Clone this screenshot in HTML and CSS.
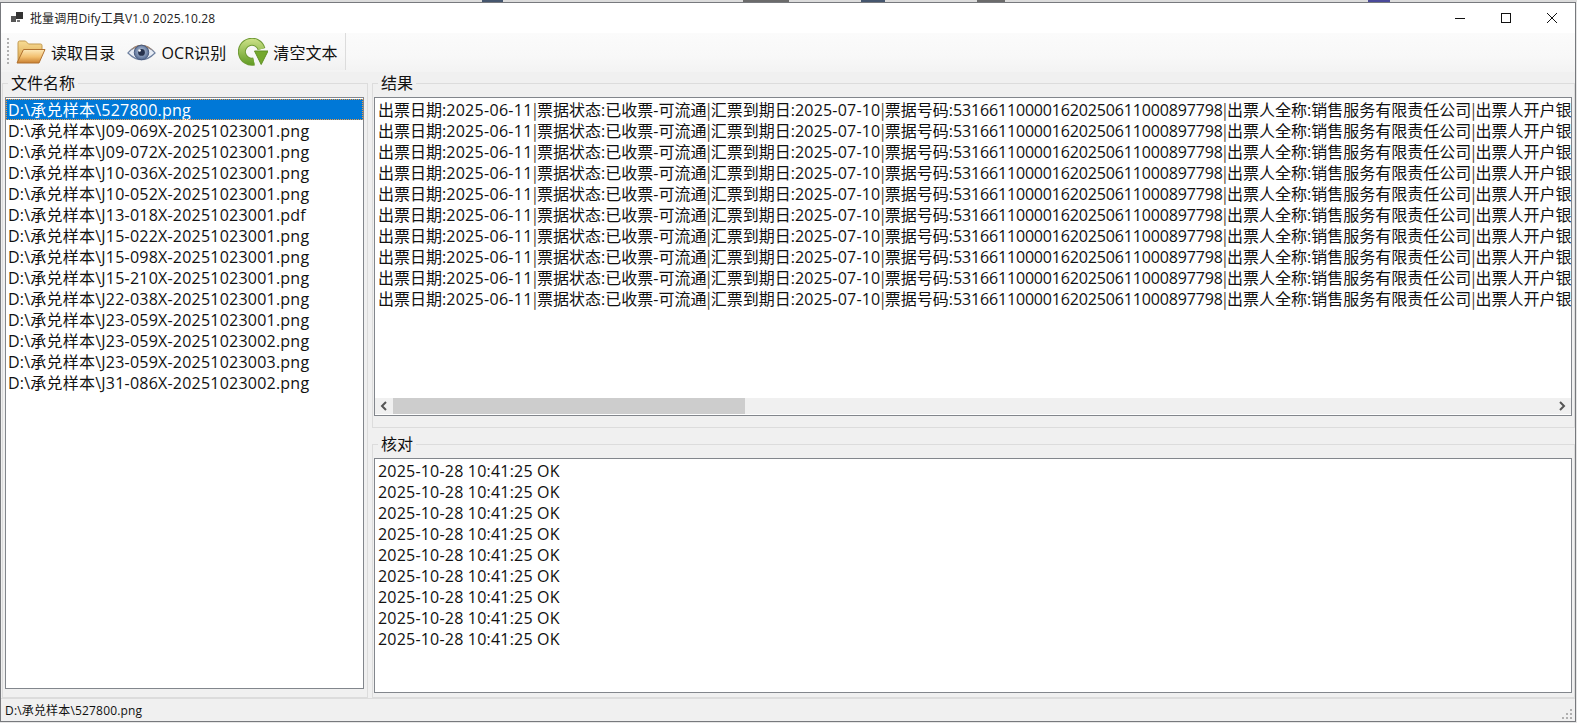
FILE: index.html
```html
<!DOCTYPE html>
<html lang="zh-CN">
<head>
<meta charset="utf-8">
<title>批量调用Dify工具V1.0 2025.10.28</title>
<link rel="stylesheet" href="styles.css">
</head>
<body>
<div class="desktop"></div>
<div class="window">
  <header class="titlebar">
    <svg class="appicon" width="12" height="12" viewBox="0 0 12 12"><rect x="0" y="4" width="5" height="6" fill="#555"/><rect x="5" y="0" width="7" height="7" fill="#333"/><rect x="6" y="8" width="3" height="2" fill="#777"/></svg>
    <span class="title">批量调用Dify工具V1.0 2025.10.28</span>
    <div class="wincontrols">
      <svg width="12" height="12" viewBox="0 0 12 12"><path d="M1 6.500h10" stroke="#111" fill="none"/></svg>
      <svg width="12" height="12" viewBox="0 0 12 12"><rect x="1.500" y="1.500" width="9" height="9" stroke="#111" fill="none"/></svg>
      <svg width="12" height="12" viewBox="0 0 12 12"><path d="M1 1l10 10M11 1L1 11" stroke="#111" fill="none"/></svg>
    </div>
  </header>
  <div class="toolbar">
    <div class="tools">
      <span class="grip"></span>
      <button class="tool">
        <svg width="30" height="24" viewBox="0 0 30 24">
          <defs>
            <linearGradient id="fb" x1="0" y1="0" x2="0" y2="1"><stop offset="0" stop-color="#f8dc94"/><stop offset="1" stop-color="#d9a048"/></linearGradient>
            <linearGradient id="ff" x1="0" y1="0" x2="0" y2="1"><stop offset="0" stop-color="#fdeabb"/><stop offset=".55" stop-color="#f2bf6e"/><stop offset="1" stop-color="#c97f30"/></linearGradient>
          </defs>
          <path d="M2 22V3Q2 1 3.500 1h6l3 3h12q1.500 0 1.500 1.500V10H8L3 22z" fill="url(#fb)" stroke="#c39a50"/>
          <path d="M1 23h22l6-13.500H7.500z" fill="url(#ff)" stroke="#b0712f" stroke-linejoin="round"/>
        </svg>
        <span>读取目录</span>
      </button>
      <button class="tool">
        <svg width="29" height="24" viewBox="0 0 30 24">
          <defs>
            <radialGradient id="ir" cx=".5" cy=".45" r=".55"><stop offset="0" stop-color="#c6d3e8"/><stop offset="1" stop-color="#50678f"/></radialGradient>
            <linearGradient id="lid" x1="0" y1="0" x2="0" y2="1"><stop offset="0" stop-color="#b98552"/><stop offset="1" stop-color="#7c8aa5"/></linearGradient>
          </defs>
          <path d="M1 13Q15-3 29 13Q15 27 1 13z" fill="#e8edf5" stroke="#6c7f9f" stroke-width="1.200"/>
          <path d="M1 12Q15-3 29 12Q15 2 1 12z" fill="url(#lid)"/>
          <circle cx="15" cy="12.500" r="7.500" fill="url(#ir)" stroke="#46597d"/>
          <circle cx="15" cy="12.500" r="3.500" fill="#26324d"/>
          <circle cx="13" cy="10.500" r="1.300" fill="#fff"/>
        </svg>
        <span>OCR识别</span>
      </button>
      <button class="tool">
        <svg width="30" height="28" viewBox="0 0 30 28">
          <defs>
            <linearGradient id="gr" gradientUnits="userSpaceOnUse" x1="0" y1="0" x2="0" y2="28"><stop offset="0" stop-color="#cfe38a"/><stop offset="1" stop-color="#5c981f"/></linearGradient>
          </defs>
          <path d="M16 23.500A10 10 0 1 1 23.500 11" fill="none" stroke="#6f9a35" stroke-width="8"/>
          <path d="M16 23.500A10 10 0 1 1 23.500 11" fill="none" stroke="url(#gr)" stroke-width="6"/>
          <path d="M16.500 13h13.500l-6.800 13.500z" fill="#74a82e" stroke="#5f9024" stroke-linejoin="round"/>
        </svg>
        <span>清空文本</span>
      </button>
    </div>
  </div>
  <main class="content">
    <fieldset class="group files">
      <legend>文件名称</legend>
      <ul class="box list">
        <li class="selected">D:\承兑样本\527800.png</li>
        <li>D:\承兑样本\J09-069X-20251023001.png</li>
        <li>D:\承兑样本\J09-072X-20251023001.png</li>
        <li>D:\承兑样本\J10-036X-20251023001.png</li>
        <li>D:\承兑样本\J10-052X-20251023001.png</li>
        <li>D:\承兑样本\J13-018X-20251023001.pdf</li>
        <li>D:\承兑样本\J15-022X-20251023001.png</li>
        <li>D:\承兑样本\J15-098X-20251023001.png</li>
        <li>D:\承兑样本\J15-210X-20251023001.png</li>
        <li>D:\承兑样本\J22-038X-20251023001.png</li>
        <li>D:\承兑样本\J23-059X-20251023001.png</li>
        <li>D:\承兑样本\J23-059X-20251023002.png</li>
        <li>D:\承兑样本\J23-059X-20251023003.png</li>
        <li>D:\承兑样本\J31-086X-20251023002.png</li>
      </ul>
    </fieldset>
    <div class="right">
      <fieldset class="group results">
        <legend>结果</legend>
        <div class="box resultbox">
          <div class="lines">
            <p>出票日期:<span class="d1">2025-06-11</span><b>|</b>票据状态:已收票-可流通<b>|</b>汇票到期日:<span class="d2">2025-07-10</span><b>|</b>票据号码:<span class="num">531661100001620250611000897798</span><b>|</b>出票人全称:销售服务有限责任公司<b>|</b>出票人开户银</p>
            <p>出票日期:<span class="d1">2025-06-11</span><b>|</b>票据状态:已收票-可流通<b>|</b>汇票到期日:<span class="d2">2025-07-10</span><b>|</b>票据号码:<span class="num">531661100001620250611000897798</span><b>|</b>出票人全称:销售服务有限责任公司<b>|</b>出票人开户银</p>
            <p>出票日期:<span class="d1">2025-06-11</span><b>|</b>票据状态:已收票-可流通<b>|</b>汇票到期日:<span class="d2">2025-07-10</span><b>|</b>票据号码:<span class="num">531661100001620250611000897798</span><b>|</b>出票人全称:销售服务有限责任公司<b>|</b>出票人开户银</p>
            <p>出票日期:<span class="d1">2025-06-11</span><b>|</b>票据状态:已收票-可流通<b>|</b>汇票到期日:<span class="d2">2025-07-10</span><b>|</b>票据号码:<span class="num">531661100001620250611000897798</span><b>|</b>出票人全称:销售服务有限责任公司<b>|</b>出票人开户银</p>
            <p>出票日期:<span class="d1">2025-06-11</span><b>|</b>票据状态:已收票-可流通<b>|</b>汇票到期日:<span class="d2">2025-07-10</span><b>|</b>票据号码:<span class="num">531661100001620250611000897798</span><b>|</b>出票人全称:销售服务有限责任公司<b>|</b>出票人开户银</p>
            <p>出票日期:<span class="d1">2025-06-11</span><b>|</b>票据状态:已收票-可流通<b>|</b>汇票到期日:<span class="d2">2025-07-10</span><b>|</b>票据号码:<span class="num">531661100001620250611000897798</span><b>|</b>出票人全称:销售服务有限责任公司<b>|</b>出票人开户银</p>
            <p>出票日期:<span class="d1">2025-06-11</span><b>|</b>票据状态:已收票-可流通<b>|</b>汇票到期日:<span class="d2">2025-07-10</span><b>|</b>票据号码:<span class="num">531661100001620250611000897798</span><b>|</b>出票人全称:销售服务有限责任公司<b>|</b>出票人开户银</p>
            <p>出票日期:<span class="d1">2025-06-11</span><b>|</b>票据状态:已收票-可流通<b>|</b>汇票到期日:<span class="d2">2025-07-10</span><b>|</b>票据号码:<span class="num">531661100001620250611000897798</span><b>|</b>出票人全称:销售服务有限责任公司<b>|</b>出票人开户银</p>
            <p>出票日期:<span class="d1">2025-06-11</span><b>|</b>票据状态:已收票-可流通<b>|</b>汇票到期日:<span class="d2">2025-07-10</span><b>|</b>票据号码:<span class="num">531661100001620250611000897798</span><b>|</b>出票人全称:销售服务有限责任公司<b>|</b>出票人开户银</p>
            <p>出票日期:<span class="d1">2025-06-11</span><b>|</b>票据状态:已收票-可流通<b>|</b>汇票到期日:<span class="d2">2025-07-10</span><b>|</b>票据号码:<span class="num">531661100001620250611000897798</span><b>|</b>出票人全称:销售服务有限责任公司<b>|</b>出票人开户银</p>
          </div>
          <div class="hscroll">
            <span class="arrow"><svg width="8" height="10" viewBox="0 0 8 10"><path d="M6 1L2 5l4 4" stroke="#555" stroke-width="2" fill="none"/></svg></span>
            <div class="track"><div class="thumb"></div></div>
            <span class="arrow"><svg width="8" height="10" viewBox="0 0 8 10"><path d="M2 1l4 4-4 4" stroke="#555" stroke-width="2" fill="none"/></svg></span>
          </div>
        </div>
      </fieldset>
      <fieldset class="group check">
        <legend>核对</legend>
        <div class="box checkbox">
          <p>2025-10-28 10:41:25 OK</p>
          <p>2025-10-28 10:41:25 OK</p>
          <p>2025-10-28 10:41:25 OK</p>
          <p>2025-10-28 10:41:25 OK</p>
          <p>2025-10-28 10:41:25 OK</p>
          <p>2025-10-28 10:41:25 OK</p>
          <p>2025-10-28 10:41:25 OK</p>
          <p>2025-10-28 10:41:25 OK</p>
          <p>2025-10-28 10:41:25 OK</p>
        </div>
      </fieldset>
    </div>
  </main>
  <footer class="statusbar">
    <span>D:\承兑样本\527800.png</span>
    <svg class="resize" width="12" height="12" viewBox="0 0 12 12" fill="#b0b0b0"><rect x="8" y="0" width="2" height="2"/><rect x="4" y="4" width="2" height="2"/><rect x="8" y="4" width="2" height="2"/><rect x="0" y="8" width="2" height="2"/><rect x="4" y="8" width="2" height="2"/><rect x="8" y="8" width="2" height="2"/></svg>
  </footer>
</div>
</body>
</html>
```
FILE: styles.css
```css
* { box-sizing: border-box; }
html, body { margin: 0; height: 100%; overflow: hidden; }
body { background: #e6e6e6; font-family: "Open Sans", "Noto Sans CJK SC", sans-serif; color: #111; }
p { margin: 0; }
.desktop { height: 2px; background: linear-gradient(to right, #dcdcdc 482px, #45566e 482px 503px, #dcdcdc 503px 743px, #6b6b6b 743px 789px, #dcdcdc 789px 861px, #45566e 861px 885px, #dcdcdc 885px 977px, #6b6b6b 977px 1005px, #dcdcdc 1005px 1368px, #4a4a9a 1368px 1390px, #dcdcdc 1390px); }
.window { height: 720px; width: 1576px; border: 1px solid #77797d; background: #f0f0f0; display: flex; flex-direction: column; }
.titlebar { height: 30px; background: #fff; display: flex; align-items: center; padding-left: 10px; flex: none; }
.appicon { margin-right: 7px; }
.title { font-size: 12px; letter-spacing: .12px; color: #222; }
.wincontrols { margin-left: auto; display: flex; gap: 34px; padding-right: 17px; }
.toolbar { height: 39px; flex: none; background: linear-gradient(#fbfbfb, #f8f8f8 60%, #f3f3f3); }
.tools { width: 345px; height: 37px; display: flex; align-items: center; padding-left: 6px; border-right: 1px solid #dcdcdc; background: linear-gradient(#fbfbfb, #f7f7f7 60%, #f1f1f1); }
.grip { width: 2px; height: 28px; margin-right: 7px; background: repeating-linear-gradient(#b0b0b0 0 2px, transparent 2px 4px); }
.tool { display: flex; align-items: center; gap: 5px; border: 0; background: none; padding: 0; font: inherit; font-size: 16px; letter-spacing: .1px; color: #111; }
.tool + .tool { margin-left: 12px; }
.content { flex: 1; min-height: 0; display: grid; grid-template-columns: 366px 1fr; gap: 4px; padding: 1px 0 0 1px; }
.group { margin: 0; min-width: 0; border: 1px solid #dcdcdc; display: flex; flex-direction: column; }
.group legend { padding: 0 3px; font-size: 16px; line-height: 20px; }
.files { padding: 4px 3px 8px 2px; }
.files legend { margin-left: 3px; }
.results { height: 355px; flex: none; padding: 4px 2px 11px 1px; }
.check { flex: 1; min-height: 0; padding: 4px 2px 4px 1px; }
.results legend, .check legend { margin-left: 4px; }
.box { background: #fff; border: 1px solid #82868c; flex: 1; min-height: 0; margin: 0; font-size: 16px; line-height: 21px; letter-spacing: .22px; }
.list { list-style: none; padding: 1px 0 0; }
.list li { height: 21px; padding: 1px 0 0 2px; line-height: 20px; white-space: nowrap; }
.list .selected { background: #0078d7; color: #fff; outline: 1px dotted #f39a3d; outline-offset: -1px; }
.right { display: flex; flex-direction: column; gap: 6px; min-width: 0; }
.resultbox { display: flex; flex: none; height: 319px; flex-direction: column; overflow: hidden; padding-bottom: 1px; letter-spacing: 0; }
.lines { flex: 1; min-height: 0; padding: 2px 0 0 3px; white-space: nowrap; overflow: hidden; }
.lines p { height: 21px; }
.lines b { font-family: "Noto Sans CJK SC", sans-serif; font-weight: 400; line-height: 1; color: #4a3a2a; }
.d1 { letter-spacing: .3px; }
.d2 { letter-spacing: .2px; }
.num { letter-spacing: -.16px; }
.hscroll { height: 16px; flex: none; display: flex; background: #f0f0f0; }
.arrow { flex: none; width: 18px; display: flex; align-items: center; justify-content: center; }
.track { flex: 1; height: 100%; }
.thumb { width: 352px; height: 100%; background: #cdcdcd; }
.checkbox { padding: 2px 3px; letter-spacing: .2px; }
.statusbar { height: 23px; flex: none; display: flex; align-items: center; justify-content: space-between; padding: 0 1px 0 4px; font-size: 12px; letter-spacing: .17px; border-top: 1px solid #dcdcdc; }
.resize { align-self: flex-end; }
```
